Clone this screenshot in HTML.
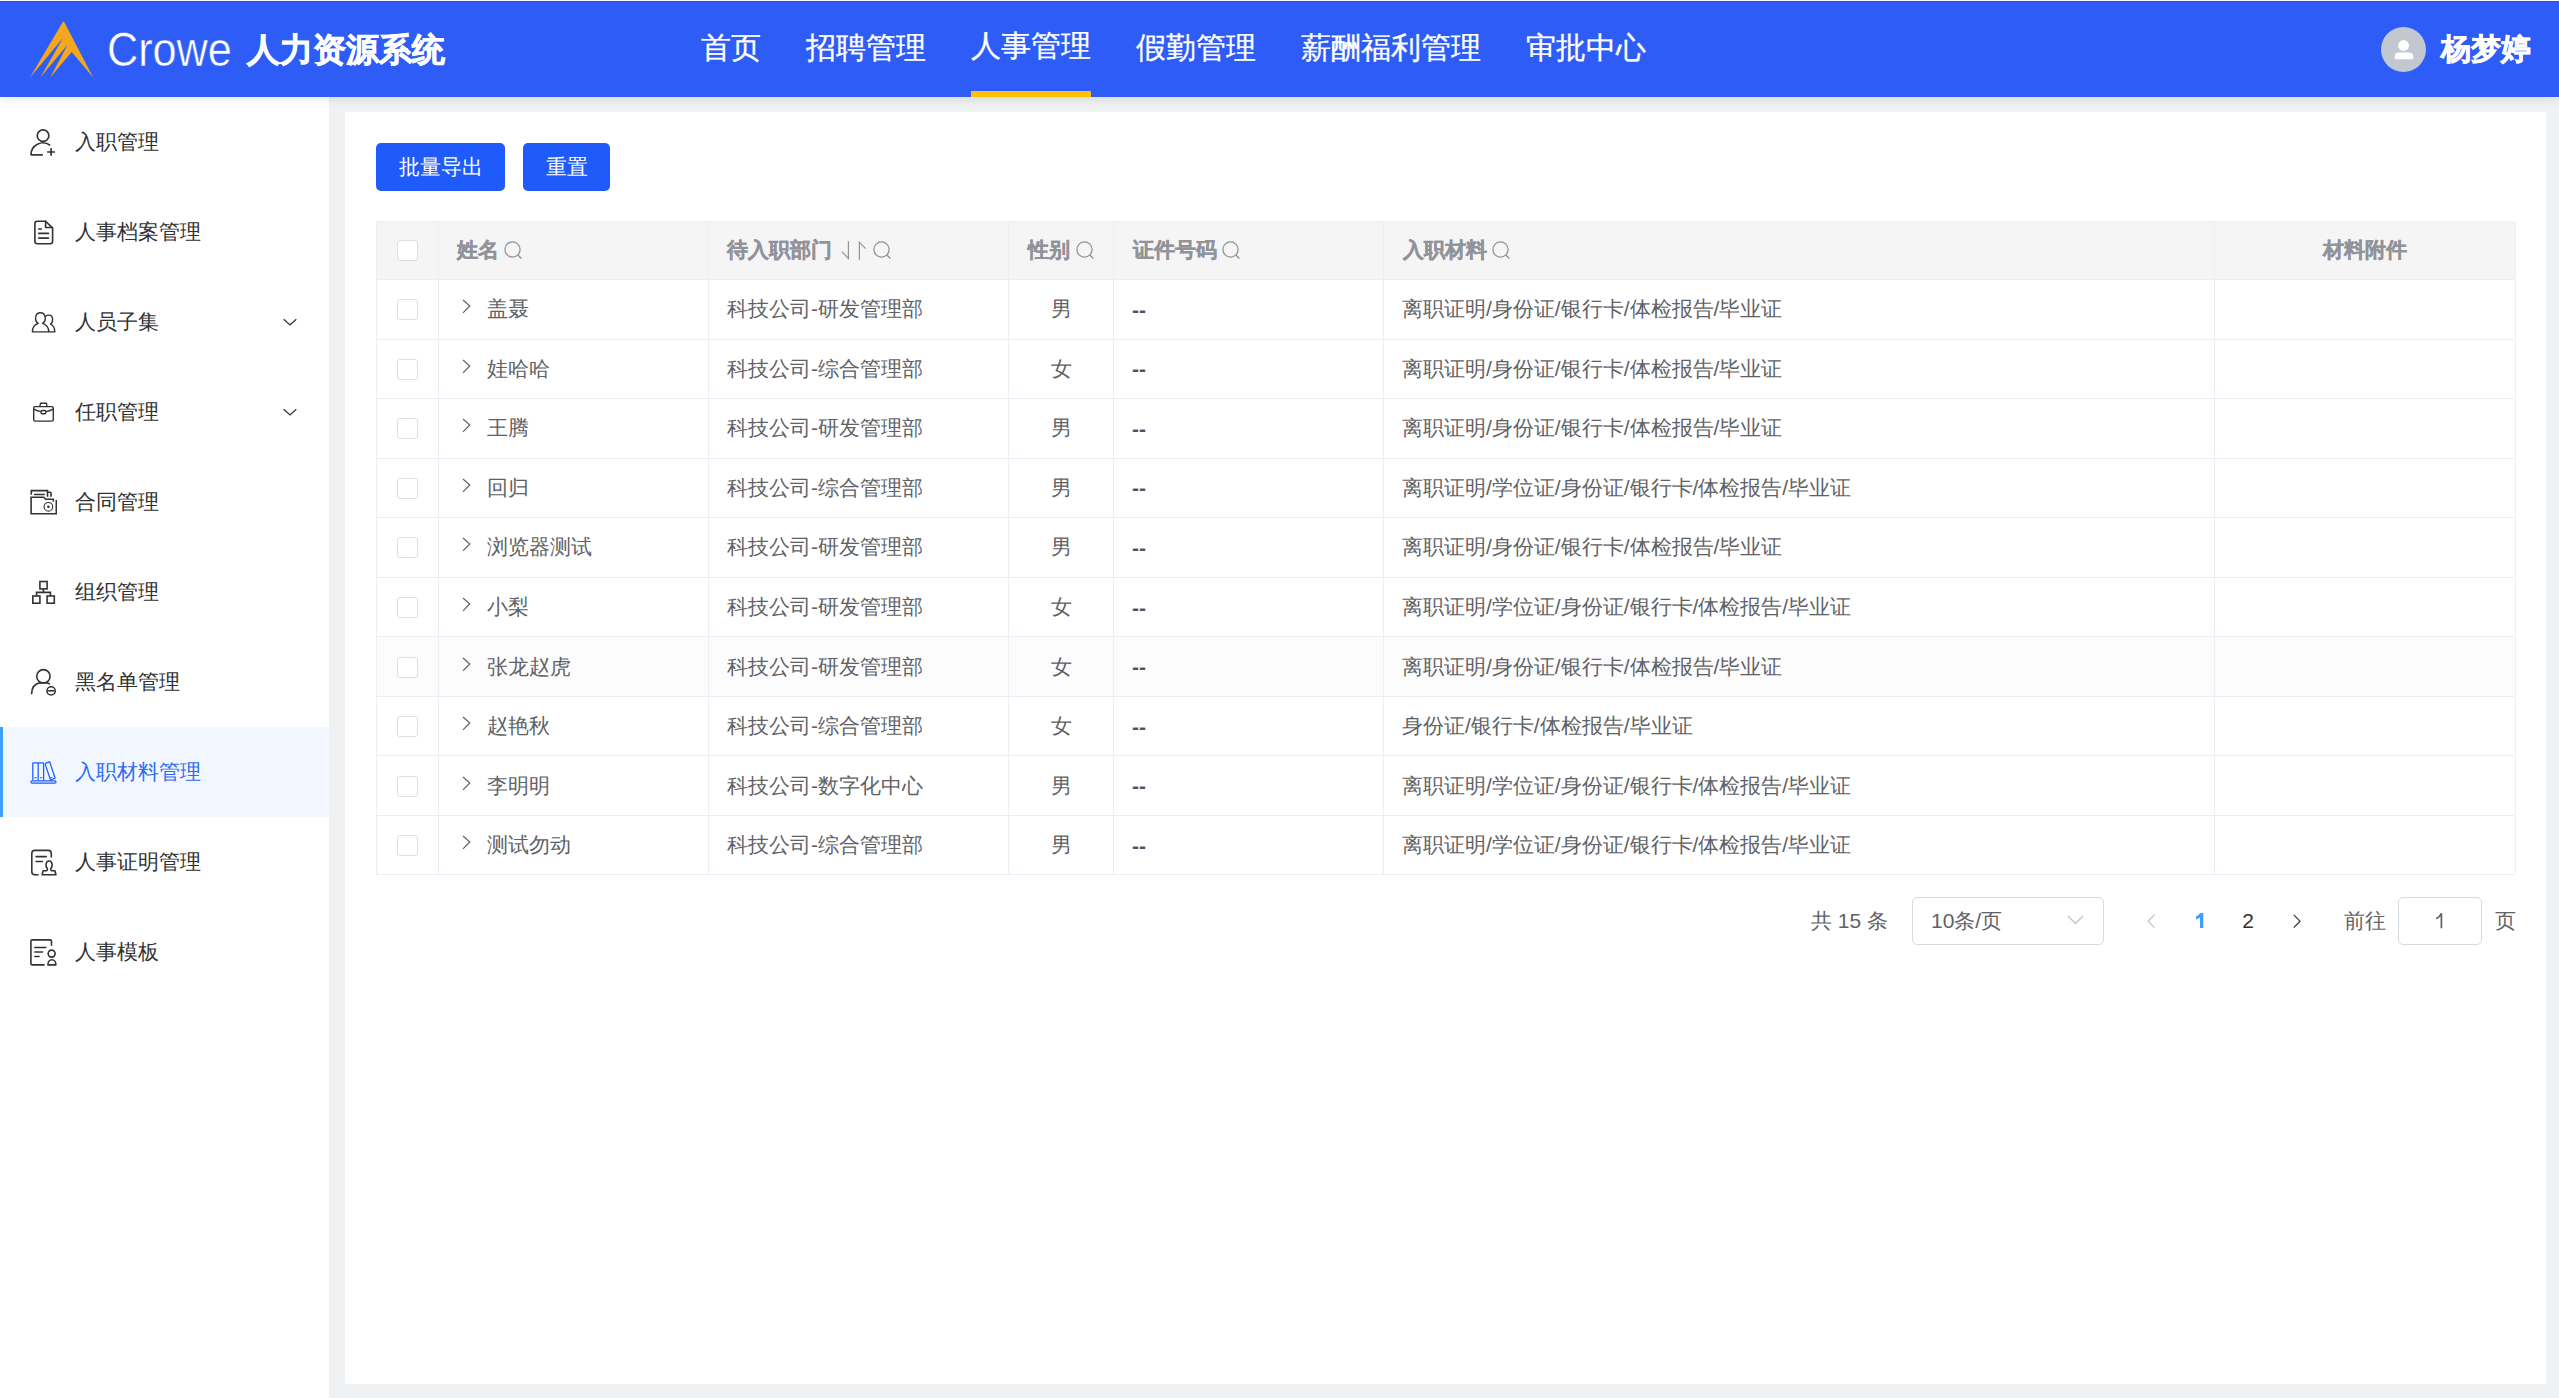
<!DOCTYPE html>
<html><head><meta charset="utf-8">
<style>
*{box-sizing:border-box;margin:0;padding:0}
html,body{width:2559px;height:1398px;overflow:hidden}
body{position:relative;background:#f0f1f3;font-family:"Liberation Sans",sans-serif;color:#303133}
.abs{position:absolute}
#hdr{position:absolute;left:0;top:1px;width:2559px;height:96px;background:#2e5cf6;border-top:1px solid #2450f2;z-index:2;box-shadow:0 2px 10px rgba(0,0,0,.10)}
#crowe{position:absolute;left:107px;top:20px;font-size:48px;line-height:56px;color:#fff;transform:scaleX(0.9);transform-origin:0 0;-webkit-text-stroke:0.5px #2e5cf6}
#sys{position:absolute;left:247px;top:28px;font-size:33px;line-height:40px;font-weight:bold;color:#fff;-webkit-text-stroke:0.7px #fff}
.nav{position:absolute;top:26px;font-size:30px;line-height:40px;color:#fff;white-space:nowrap;-webkit-text-stroke:0.3px #fff}
#uline{position:absolute;left:971px;top:89px;width:120px;height:6px;background:#ffc000}
#avatar{position:absolute;left:2381px;top:24.7px;width:45px;height:45px;border-radius:50%;background:#c3c7cf}
#uname{position:absolute;left:2441px;top:27px;font-size:30px;line-height:40px;font-weight:bold;color:#fff;-webkit-text-stroke:0.6px #fff}
#side{position:absolute;left:0;top:96px;width:329px;height:1302px;background:#fff}
.mi{position:absolute;left:0;width:329px;height:90px}
.mi .ic{position:absolute;left:29px;top:31px;width:28px;height:28px}
.mi .tx{position:absolute;left:75px;top:30px;font-size:21px;line-height:30px;color:#303133;white-space:nowrap}
.mi .chev{position:absolute;left:283px;top:38px;width:15px;height:12px}
.mi.act{background:#f2f7ff}
.mi.act .tx{color:#2e6bf5}
.mi.act:before{content:"";position:absolute;left:0;top:0;width:3px;height:90px;background:#409eff}
#card{position:absolute;left:345px;top:112px;width:2201px;height:1272px;background:#fff}
.btn{position:absolute;top:143px;height:48px;border-radius:5px;background:#1e5bfa;color:#fff;font-size:21px;line-height:48px;text-align:center;white-space:nowrap}
#tbl{position:absolute;left:376px;top:221px;width:2139px;border-top:1px solid #ebeef5;border-left:1px solid #ebeef5}
.row{position:relative;height:59.56px;border-bottom:1px solid #ebeef5}
.row.h{height:58px;background:#f5f5f5}
.row.hv{background:#fcfcfd}
.cell{position:absolute;top:0;height:100%;border-right:1px solid #ebeef5;font-size:21px;color:#606266;white-space:nowrap}
.cell span{position:absolute;top:50%;transform:translateY(-50%);line-height:30px}
.h .cell{color:#909399;font-weight:bold;-webkit-text-stroke:0.3px #909399}
.h .cell span{margin-top:-1px}
.h .cb{margin-top:-11px}
.cb{position:absolute;left:20px;top:50%;margin-top:-10px;width:21px;height:21px;border:1px solid #dcdfe6;border-radius:3px;background:#fff}
.pg{position:absolute;font-size:21px;line-height:30px;color:#606266;white-space:nowrap}
</style></head><body>
<div class="abs" style="left:0;top:0;width:2559px;height:1px;background:#fff;z-index:3"></div>
<div id="hdr">
  <svg class="abs" style="left:28px;top:19px" width="68" height="60" viewBox="28 20 68 60">
    <path fill="#f2a71e" d="M30 76.6 L62.9 20.7 L64.1 20.7 L93.2 76.6 L71.7 51.1 L50.2 76.6 L67.6 43.8 L40.3 76.6 L62.8 37.3 Z"/>
  </svg>
  <div id="crowe">Crowe</div>
  <div id="sys">人力资源系统</div>
  <div class="nav" style="left:700.8px">首页</div>
  <div class="nav" style="left:805.7px">招聘管理</div>
  <div class="nav" style="left:970.7px;top:24px">人事管理</div>
  <div class="nav" style="left:1135.8px">假勤管理</div>
  <div class="nav" style="left:1300.8px">薪酬福利管理</div>
  <div class="nav" style="left:1525.8px">审批中心</div>
  <div id="uline"></div>
  <div id="avatar"><svg width="45" height="45" viewBox="0 0 45 45"><circle cx="22.6" cy="18.5" r="5.4" fill="#fff"/><path fill="#fff" d="M13.7 32.2 V29.3 Q13.7 25.5 18.5 25.5 H27.4 Q32.2 25.5 32.2 29.3 V32.2 Z"/></svg></div>
  <div id="uname">杨梦婷</div>
</div>

<div id="side">
<div class="mi" style="top:1px"><svg class="ic" width="28" height="28" viewBox="0 0 28 28"><g fill="none" stroke="#333" stroke-width="1.7"><circle cx="14.05" cy="7.65" r="5.8"/><path d="M1.9 27 A12 12 0 0 1 21.1 17.3"/><path d="M1.9 26.9 H13.9"/><path d="M18.2 24 H26 M22.1 20.3 V27.8"/></g></svg><div class="tx">入职管理</div></div>
<div class="mi" style="top:91px"><svg class="ic" width="28" height="28" viewBox="0 0 28 28"><g fill="none" stroke="#333" stroke-width="1.6" stroke-linecap="round"><path d="M16.6 3.2 H8.4 Q5.9 3.2 5.9 5.7 V23.2 Q5.9 25.7 8.4 25.7 H21.1 Q23.6 25.7 23.6 23.2 V10.2 Z"/><path d="M16.6 3.4 V9.5 H23.4"/><path d="M9.7 11 H12.4 M9.7 15.4 H19.5 M9.7 20.1 H19.5"/></g></svg><div class="tx">人事档案管理</div></div>
<div class="mi" style="top:181px"><svg class="ic" width="28" height="28" viewBox="0 0 28 28"><g fill="none" stroke="#333" stroke-width="1.4" stroke-linejoin="round"><path d="M9.3 15.3 C5.3 13.4 5.5 4.7 11.4 4.7 C17.3 4.7 17.5 13.4 13.5 15.3 C17.6 16.6 19.8 20 19.8 23.9 H3.4 C3.4 20 5.2 16.6 9.3 15.3 Z"/><path d="M16.4 8.4 C17.6 7.3 18.7 7.1 19.8 7.1 C22.3 7.1 23.6 9.4 23.6 11.7 C23.6 13.6 22.8 15.2 21.5 16.1 C24.3 17.3 25.8 20.3 25.8 23.9 H19.8"/></g></svg><div class="tx">人员子集</div><svg class="chev" viewBox="0 0 15 12"><path d="M0.7 4.2 L7 9.9 L13.3 4.2" fill="none" stroke="#333" stroke-width="1.3"/></svg></div>
<div class="mi" style="top:271px"><svg class="ic" width="28" height="28" viewBox="0 0 28 28"><g fill="none" stroke="#333" stroke-width="1.4" stroke-linejoin="round"><rect x="4.7" y="8.6" width="19.6" height="14.5" rx="1.4"/><path d="M10.8 8.6 L11.5 5.3 H17.4 L18.1 8.6"/><path d="M4.7 11.2 Q8.5 13.3 12.1 13.6 M16.8 13.6 Q20.5 13.3 24.3 11.2"/><rect x="12.1" y="12.5" width="4.7" height="3.2" rx="1"/></g></svg><div class="tx">任职管理</div><svg class="chev" viewBox="0 0 15 12"><path d="M0.7 4.2 L7 9.9 L13.3 4.2" fill="none" stroke="#333" stroke-width="1.3"/></svg></div>
<div class="mi" style="top:361px"><svg class="ic" width="28" height="28" viewBox="0 0 28 28"><g fill="none" stroke="#333" stroke-width="1.6"><path d="M2.3 6.7 V2.6 H18.5 V8.8"/><path d="M18.5 4.3 H21.3 Q22 4.3 22 5 V8.8"/><path d="M5.7 6.5 H15.1" stroke-linecap="round"/><path d="M24.3 13.6 V11.3 H16.8 L14.6 9.2 H2.1 V25.8 H27.3 V12.1"/><circle cx="19.4" cy="18.8" r="4.3" stroke-width="1.1"/></g><circle cx="19.4" cy="18.8" r="1.3" fill="#333"/></svg><div class="tx">合同管理</div></div>
<div class="mi" style="top:451px"><svg class="ic" width="28" height="28" viewBox="0 0 28 28"><g fill="none" stroke="#333" stroke-width="1.6"><rect x="10.9" y="3.5" width="7.2" height="7.4"/><rect x="3.8" y="18" width="7.1" height="7.2"/><rect x="18.1" y="18" width="7.2" height="7.2"/><path d="M14.4 10.9 V14.4 M7.6 18 V14.4 H21.4 V18"/></g></svg><div class="tx">组织管理</div></div>
<div class="mi" style="top:541px"><svg class="ic" width="28" height="28" viewBox="0 0 28 28"><g fill="none" stroke="#333" stroke-width="1.6"><circle cx="14.4" cy="8.35" r="6.7"/><path d="M2.5 26.3 C2.8 19 6.5 15.5 11 14.9 C14 14.6 18.5 14.6 21 16"/><circle cx="22.1" cy="22.9" r="4.1"/><path d="M19.1 22.8 H25.2"/></g></svg><div class="tx">黑名单管理</div></div>
<div class="mi act" style="top:631px"><svg class="ic" width="28" height="28" viewBox="0 0 28 28"><g fill="none" stroke="#1a5cff" stroke-width="1.25" stroke-linejoin="round"><rect x="2.0" y="22.9" width="25" height="2.3" rx="1.15"/><path d="M3.8 22.3 V5.6 Q3.8 4.8 4.6 4.8 H13.8 Q14.6 4.8 14.6 5.6 V22.3 M9.2 4.9 V22.3"/><path d="M16 5.6 L21.6 22.2 M16.1 5.4 L20.7 3.8 L26.1 20.2 L21.8 22"/><path d="M5.3 19.7 H7.7 M11 19.7 H13.3 M21.5 19.8 L23.3 19.2" stroke-width="1.1"/></g></svg><div class="tx">入职材料管理</div></div>
<div class="mi" style="top:721px"><svg class="ic" width="28" height="28" viewBox="0 0 28 28"><g fill="none" stroke="#333" stroke-width="1.6" stroke-linejoin="round"><path d="M22.3 9.6 V5.4 Q22.3 2.4 19.3 2.4 H5.8 Q2.8 2.4 2.8 5.4 V23.7 Q2.8 26.7 5.8 26.7 H9.6"/><path d="M7.1 8.6 H17.2 M7.1 13.5 H13.4" stroke-linecap="round"/><path d="M18.3 20.6 C16.3 18.8 16.5 13 20.1 13 C23.7 13 23.9 18.8 21.8 20.6 C21.3 22 22.2 22.8 23.5 22.8 H25.9 L26.9 26.8 H13.1 L14.2 22.8 H16.6 C17.9 22.8 18.8 22 18.3 20.6 Z"/></g></svg><div class="tx">人事证明管理</div></div>
<div class="mi" style="top:811px"><svg class="ic" width="28" height="28" viewBox="0 0 28 28"><g fill="none" stroke="#333" stroke-width="1.6" stroke-linejoin="round"><path d="M22.5 7.7 V3.3 Q22.5 1.9 21.1 1.9 H3.3 Q1.9 1.9 1.9 3.3 V25.5 Q1.9 26.9 3.3 26.9 H15.6"/><path d="M5.9 9.5 H16.8 M5.9 14 H13.5 M5.9 18.5 H10" stroke-linecap="round"/><circle cx="22.65" cy="15.6" r="3.5"/><path d="M18.9 26.9 C18.9 24 20.5 21.7 22.9 21.7 C25.3 21.7 26.9 24 26.9 26.9 Z"/></g></svg><div class="tx">人事模板</div></div>
</div>

<div id="card"></div>
<div class="btn" style="left:376px;width:129px">批量导出</div>
<div class="btn" style="left:523px;width:87px">重置</div>

<div id="tbl">
<div class="row h">
<div class="cell" style="left:0px;width:62px"><div class="cb"></div></div>
<div class="cell" style="left:62px;width:270px"><span style="left:18px">姓名</span><svg class="abs" style="left:65.4px;top:19px" width="20" height="20" viewBox="0 0 20 20"><circle cx="8.5" cy="8.5" r="7.6" fill="none" stroke="#909399" stroke-width="1.3"/><path d="M13.9 13.9 L17.4 17.4" stroke="#909399" stroke-width="1.4"/></svg></div>
<div class="cell" style="left:332px;width:300px"><span style="left:18px">待入职部门</span><svg class="abs" style="left:0;top:0" width="300" height="58" viewBox="0 0 300 58"><path d="M139.4 19.3 V36.4 L132.9 29.6 M150.4 37.7 V20.2 L156.6 26.7" fill="none" stroke="#909399" stroke-width="1.2"/></svg><svg class="abs" style="left:164px;top:19px" width="20" height="20" viewBox="0 0 20 20"><circle cx="8.5" cy="8.5" r="7.6" fill="none" stroke="#909399" stroke-width="1.3"/><path d="M13.9 13.9 L17.4 17.4" stroke="#909399" stroke-width="1.4"/></svg></div>
<div class="cell" style="left:632px;width:105px"><span style="left:19px">性别</span><svg class="abs" style="left:66.5px;top:19px" width="20" height="20" viewBox="0 0 20 20"><circle cx="8.5" cy="8.5" r="7.6" fill="none" stroke="#909399" stroke-width="1.3"/><path d="M13.9 13.9 L17.4 17.4" stroke="#909399" stroke-width="1.4"/></svg></div>
<div class="cell" style="left:737px;width:270px"><span style="left:19px">证件号码</span><svg class="abs" style="left:108px;top:19px" width="20" height="20" viewBox="0 0 20 20"><circle cx="8.5" cy="8.5" r="7.6" fill="none" stroke="#909399" stroke-width="1.3"/><path d="M13.9 13.9 L17.4 17.4" stroke="#909399" stroke-width="1.4"/></svg></div>
<div class="cell" style="left:1007px;width:831px"><span style="left:19px">入职材料</span><svg class="abs" style="left:107.5px;top:19px" width="20" height="20" viewBox="0 0 20 20"><circle cx="8.5" cy="8.5" r="7.6" fill="none" stroke="#909399" stroke-width="1.3"/><path d="M13.9 13.9 L17.4 17.4" stroke="#909399" stroke-width="1.4"/></svg></div>
<div class="cell" style="left:1838px;width:301px"><span style="left:108px">材料附件</span></div>
</div>
<div class="row"><div class="cell" style="left:0px;width:62px"><div class="cb"></div></div><div class="cell" style="left:62px;width:270px"><svg class="abs" style="left:23px;top:calc(50% - 10px)" width="12" height="16" viewBox="0 0 12 16"><path d="M1 1 L7.8 7 L1 13.8" fill="none" stroke="#606266" stroke-width="1.2"/></svg><span style="left:48px">盖聂</span></div><div class="cell" style="left:332px;width:300px"><span style="left:18px">科技公司-研发管理部</span></div><div class="cell" style="left:632px;width:105px"><span style="left:42px">男</span></div><div class="cell" style="left:737px;width:270px"><span style="left:18px;margin-top:0.5px;color:#505359;font-weight:bold">--</span></div><div class="cell" style="left:1007px;width:831px"><span style="left:18px">离职证明/身份证/银行卡/体检报告/毕业证</span></div><div class="cell" style="left:1838px;width:301px"></div></div>
<div class="row"><div class="cell" style="left:0px;width:62px"><div class="cb"></div></div><div class="cell" style="left:62px;width:270px"><svg class="abs" style="left:23px;top:calc(50% - 10px)" width="12" height="16" viewBox="0 0 12 16"><path d="M1 1 L7.8 7 L1 13.8" fill="none" stroke="#606266" stroke-width="1.2"/></svg><span style="left:48px">娃哈哈</span></div><div class="cell" style="left:332px;width:300px"><span style="left:18px">科技公司-综合管理部</span></div><div class="cell" style="left:632px;width:105px"><span style="left:42px">女</span></div><div class="cell" style="left:737px;width:270px"><span style="left:18px;margin-top:0.5px;color:#505359;font-weight:bold">--</span></div><div class="cell" style="left:1007px;width:831px"><span style="left:18px">离职证明/身份证/银行卡/体检报告/毕业证</span></div><div class="cell" style="left:1838px;width:301px"></div></div>
<div class="row"><div class="cell" style="left:0px;width:62px"><div class="cb"></div></div><div class="cell" style="left:62px;width:270px"><svg class="abs" style="left:23px;top:calc(50% - 10px)" width="12" height="16" viewBox="0 0 12 16"><path d="M1 1 L7.8 7 L1 13.8" fill="none" stroke="#606266" stroke-width="1.2"/></svg><span style="left:48px">王腾</span></div><div class="cell" style="left:332px;width:300px"><span style="left:18px">科技公司-研发管理部</span></div><div class="cell" style="left:632px;width:105px"><span style="left:42px">男</span></div><div class="cell" style="left:737px;width:270px"><span style="left:18px;margin-top:0.5px;color:#505359;font-weight:bold">--</span></div><div class="cell" style="left:1007px;width:831px"><span style="left:18px">离职证明/身份证/银行卡/体检报告/毕业证</span></div><div class="cell" style="left:1838px;width:301px"></div></div>
<div class="row"><div class="cell" style="left:0px;width:62px"><div class="cb"></div></div><div class="cell" style="left:62px;width:270px"><svg class="abs" style="left:23px;top:calc(50% - 10px)" width="12" height="16" viewBox="0 0 12 16"><path d="M1 1 L7.8 7 L1 13.8" fill="none" stroke="#606266" stroke-width="1.2"/></svg><span style="left:48px">回归</span></div><div class="cell" style="left:332px;width:300px"><span style="left:18px">科技公司-综合管理部</span></div><div class="cell" style="left:632px;width:105px"><span style="left:42px">男</span></div><div class="cell" style="left:737px;width:270px"><span style="left:18px;margin-top:0.5px;color:#505359;font-weight:bold">--</span></div><div class="cell" style="left:1007px;width:831px"><span style="left:18px">离职证明/学位证/身份证/银行卡/体检报告/毕业证</span></div><div class="cell" style="left:1838px;width:301px"></div></div>
<div class="row"><div class="cell" style="left:0px;width:62px"><div class="cb"></div></div><div class="cell" style="left:62px;width:270px"><svg class="abs" style="left:23px;top:calc(50% - 10px)" width="12" height="16" viewBox="0 0 12 16"><path d="M1 1 L7.8 7 L1 13.8" fill="none" stroke="#606266" stroke-width="1.2"/></svg><span style="left:48px">浏览器测试</span></div><div class="cell" style="left:332px;width:300px"><span style="left:18px">科技公司-研发管理部</span></div><div class="cell" style="left:632px;width:105px"><span style="left:42px">男</span></div><div class="cell" style="left:737px;width:270px"><span style="left:18px;margin-top:0.5px;color:#505359;font-weight:bold">--</span></div><div class="cell" style="left:1007px;width:831px"><span style="left:18px">离职证明/身份证/银行卡/体检报告/毕业证</span></div><div class="cell" style="left:1838px;width:301px"></div></div>
<div class="row"><div class="cell" style="left:0px;width:62px"><div class="cb"></div></div><div class="cell" style="left:62px;width:270px"><svg class="abs" style="left:23px;top:calc(50% - 10px)" width="12" height="16" viewBox="0 0 12 16"><path d="M1 1 L7.8 7 L1 13.8" fill="none" stroke="#606266" stroke-width="1.2"/></svg><span style="left:48px">小梨</span></div><div class="cell" style="left:332px;width:300px"><span style="left:18px">科技公司-研发管理部</span></div><div class="cell" style="left:632px;width:105px"><span style="left:42px">女</span></div><div class="cell" style="left:737px;width:270px"><span style="left:18px;margin-top:0.5px;color:#505359;font-weight:bold">--</span></div><div class="cell" style="left:1007px;width:831px"><span style="left:18px">离职证明/学位证/身份证/银行卡/体检报告/毕业证</span></div><div class="cell" style="left:1838px;width:301px"></div></div>
<div class="row hv"><div class="cell" style="left:0px;width:62px"><div class="cb"></div></div><div class="cell" style="left:62px;width:270px"><svg class="abs" style="left:23px;top:calc(50% - 10px)" width="12" height="16" viewBox="0 0 12 16"><path d="M1 1 L7.8 7 L1 13.8" fill="none" stroke="#606266" stroke-width="1.2"/></svg><span style="left:48px">张龙赵虎</span></div><div class="cell" style="left:332px;width:300px"><span style="left:18px">科技公司-研发管理部</span></div><div class="cell" style="left:632px;width:105px"><span style="left:42px">女</span></div><div class="cell" style="left:737px;width:270px"><span style="left:18px;margin-top:0.5px;color:#505359;font-weight:bold">--</span></div><div class="cell" style="left:1007px;width:831px"><span style="left:18px">离职证明/身份证/银行卡/体检报告/毕业证</span></div><div class="cell" style="left:1838px;width:301px"></div></div>
<div class="row"><div class="cell" style="left:0px;width:62px"><div class="cb"></div></div><div class="cell" style="left:62px;width:270px"><svg class="abs" style="left:23px;top:calc(50% - 10px)" width="12" height="16" viewBox="0 0 12 16"><path d="M1 1 L7.8 7 L1 13.8" fill="none" stroke="#606266" stroke-width="1.2"/></svg><span style="left:48px">赵艳秋</span></div><div class="cell" style="left:332px;width:300px"><span style="left:18px">科技公司-综合管理部</span></div><div class="cell" style="left:632px;width:105px"><span style="left:42px">女</span></div><div class="cell" style="left:737px;width:270px"><span style="left:18px;margin-top:0.5px;color:#505359;font-weight:bold">--</span></div><div class="cell" style="left:1007px;width:831px"><span style="left:18px">身份证/银行卡/体检报告/毕业证</span></div><div class="cell" style="left:1838px;width:301px"></div></div>
<div class="row"><div class="cell" style="left:0px;width:62px"><div class="cb"></div></div><div class="cell" style="left:62px;width:270px"><svg class="abs" style="left:23px;top:calc(50% - 10px)" width="12" height="16" viewBox="0 0 12 16"><path d="M1 1 L7.8 7 L1 13.8" fill="none" stroke="#606266" stroke-width="1.2"/></svg><span style="left:48px">李明明</span></div><div class="cell" style="left:332px;width:300px"><span style="left:18px">科技公司-数字化中心</span></div><div class="cell" style="left:632px;width:105px"><span style="left:42px">男</span></div><div class="cell" style="left:737px;width:270px"><span style="left:18px;margin-top:0.5px;color:#505359;font-weight:bold">--</span></div><div class="cell" style="left:1007px;width:831px"><span style="left:18px">离职证明/学位证/身份证/银行卡/体检报告/毕业证</span></div><div class="cell" style="left:1838px;width:301px"></div></div>
<div class="row"><div class="cell" style="left:0px;width:62px"><div class="cb"></div></div><div class="cell" style="left:62px;width:270px"><svg class="abs" style="left:23px;top:calc(50% - 10px)" width="12" height="16" viewBox="0 0 12 16"><path d="M1 1 L7.8 7 L1 13.8" fill="none" stroke="#606266" stroke-width="1.2"/></svg><span style="left:48px">测试勿动</span></div><div class="cell" style="left:332px;width:300px"><span style="left:18px">科技公司-综合管理部</span></div><div class="cell" style="left:632px;width:105px"><span style="left:42px">男</span></div><div class="cell" style="left:737px;width:270px"><span style="left:18px;margin-top:0.5px;color:#505359;font-weight:bold">--</span></div><div class="cell" style="left:1007px;width:831px"><span style="left:18px">离职证明/学位证/身份证/银行卡/体检报告/毕业证</span></div><div class="cell" style="left:1838px;width:301px"></div></div>
</div>
<div class="pg" style="left:1811px;top:906px">共 15 条</div>
<div class="abs" style="left:1912px;top:897px;width:192px;height:48px;border:1px solid #d6dae1;border-radius:5px"></div>
<div class="pg" style="left:1931px;top:906px">10条/页</div>
<svg class="abs" style="left:2067px;top:915px" width="17" height="10" viewBox="0 0 17 10"><path d="M1 1 L8.5 8.5 L16 1" fill="none" stroke="#c0c4cc" stroke-width="1.4"/></svg>
<svg class="abs" style="left:2147px;top:913.5px" width="9" height="15" viewBox="0 0 9 15"><path d="M7.5 0.8 L1 7.2 L7.5 13.6" fill="none" stroke="#c0c4cc" stroke-width="1.2"/></svg>
<svg class="abs" style="left:2195px;top:912px" width="10" height="17" viewBox="0 0 10 17"><path d="M5 1 H8.3 V16 H5 V5.6 Q3.4 6.9 1 7.4 V4.6 Q3.8 3.6 5 1 Z" fill="#409eff"/></svg>
<div class="pg" style="left:2242.3px;top:906px;color:#303133">2</div>
<svg class="abs" style="left:2292.5px;top:913.5px" width="9" height="15" viewBox="0 0 9 15"><path d="M0.8 0.8 L7 7.2 L0.8 13.6" fill="none" stroke="#303133" stroke-width="1.2"/></svg>
<div class="pg" style="left:2344px;top:906px">前往</div>
<div class="abs" style="left:2398px;top:897px;width:84px;height:48px;border:1px solid #d6dae1;border-radius:5px"></div>
<svg class="abs" style="left:2435px;top:912px" width="10" height="17" viewBox="0 0 10 17"><path d="M6.4 1.2 V16.3 M6.4 1.2 Q5 4.8 1.2 6.8" fill="none" stroke="#606266" stroke-width="1.7"/></svg>
<div class="pg" style="left:2494.5px;top:906px">页</div>

</body></html>
